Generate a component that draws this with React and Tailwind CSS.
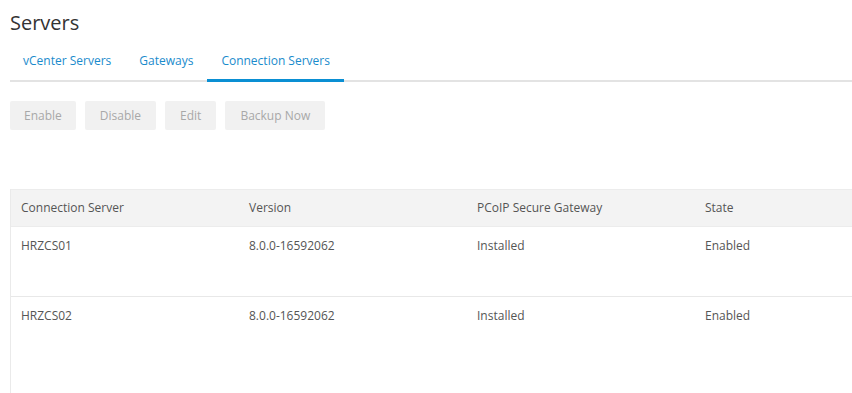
const servers = [
  { name: 'HRZCS01', version: '8.0.0-16592062', pcoip: 'Installed', state: 'Enabled' },
  { name: 'HRZCS02', version: '8.0.0-16592062', pcoip: 'Installed', state: 'Enabled' },
];

const tabs = ['vCenter Servers', 'Gateways', 'Connection Servers'];
const actions = ['Enable', 'Disable', 'Edit', 'Backup Now'];

export default function App() {
  return (
    <div className="w-[852px] h-[393px] overflow-hidden bg-white pl-[10px] flex flex-col font-['Open_Sans',sans-serif]">
      <h1 className="pt-[9px] text-[20px] leading-[28px] text-[#333]">Servers</h1>

      <div className="mt-[3px] flex border-b-2 border-[#e3e3e3] h-[42px] shrink-0">
        {tabs.map((t, i) => (
          <div
            key={t}
            className={
              i === 2
                ? 'px-[14px] pt-[12px] text-[12px] text-[#1a8bcc] border-b-[3px] border-[#0a8fd3] mb-[-2px]'
                : i === 0
                  ? 'pl-[13px] pr-[14px] pt-[12px] text-[12px] text-[#1a8bcc]'
                  : 'px-[14px] pt-[12px] text-[12px] text-[#1a8bcc]'
            }
          >
            {t}
          </div>
        ))}
      </div>

      <div className="mt-[19px] flex gap-[9px]">
        {actions.map((a) => (
          <button
            key={a}
            className="h-[29px] px-[15px] first:px-[14px] bg-[#f1f1f1] text-[12px] text-[#a8a8a8] rounded-[2px]"
          >
            {a}
          </button>
        ))}
      </div>

      <div className="mt-[59px] flex-1 border-l border-[#eaeaea]">
        <div className="grid grid-cols-[228px_228px_228px_1fr] h-[38px] items-center bg-[#f3f3f3] border-t border-[#ececec] border-b border-[#e6e6e6] text-[12px] text-[#555]">
          <div className="pl-[10px]">Connection Server</div>
          <div className="pl-[10px]">Version</div>
          <div className="pl-[10px]">PCoIP Secure Gateway</div>
          <div className="pl-[10px]">State</div>
        </div>
        {servers.map((s, i) => (
          <div
            key={s.name}
            className={
              i < servers.length - 1
                ? 'grid grid-cols-[228px_228px_228px_1fr] h-[70px] border-b border-[#e8e8e8] pt-[10px] text-[12px] leading-[18px] text-[#555]'
                : 'grid grid-cols-[228px_228px_228px_1fr] h-[70px] pt-[10px] text-[12px] leading-[18px] text-[#555]'
            }
          >
            <div className="pl-[10px]">{s.name}</div>
            <div className="pl-[10px]">{s.version}</div>
            <div className="pl-[10px]">{s.pcoip}</div>
            <div className="pl-[10px]">{s.state}</div>
          </div>
        ))}
      </div>
    </div>
  );
}
